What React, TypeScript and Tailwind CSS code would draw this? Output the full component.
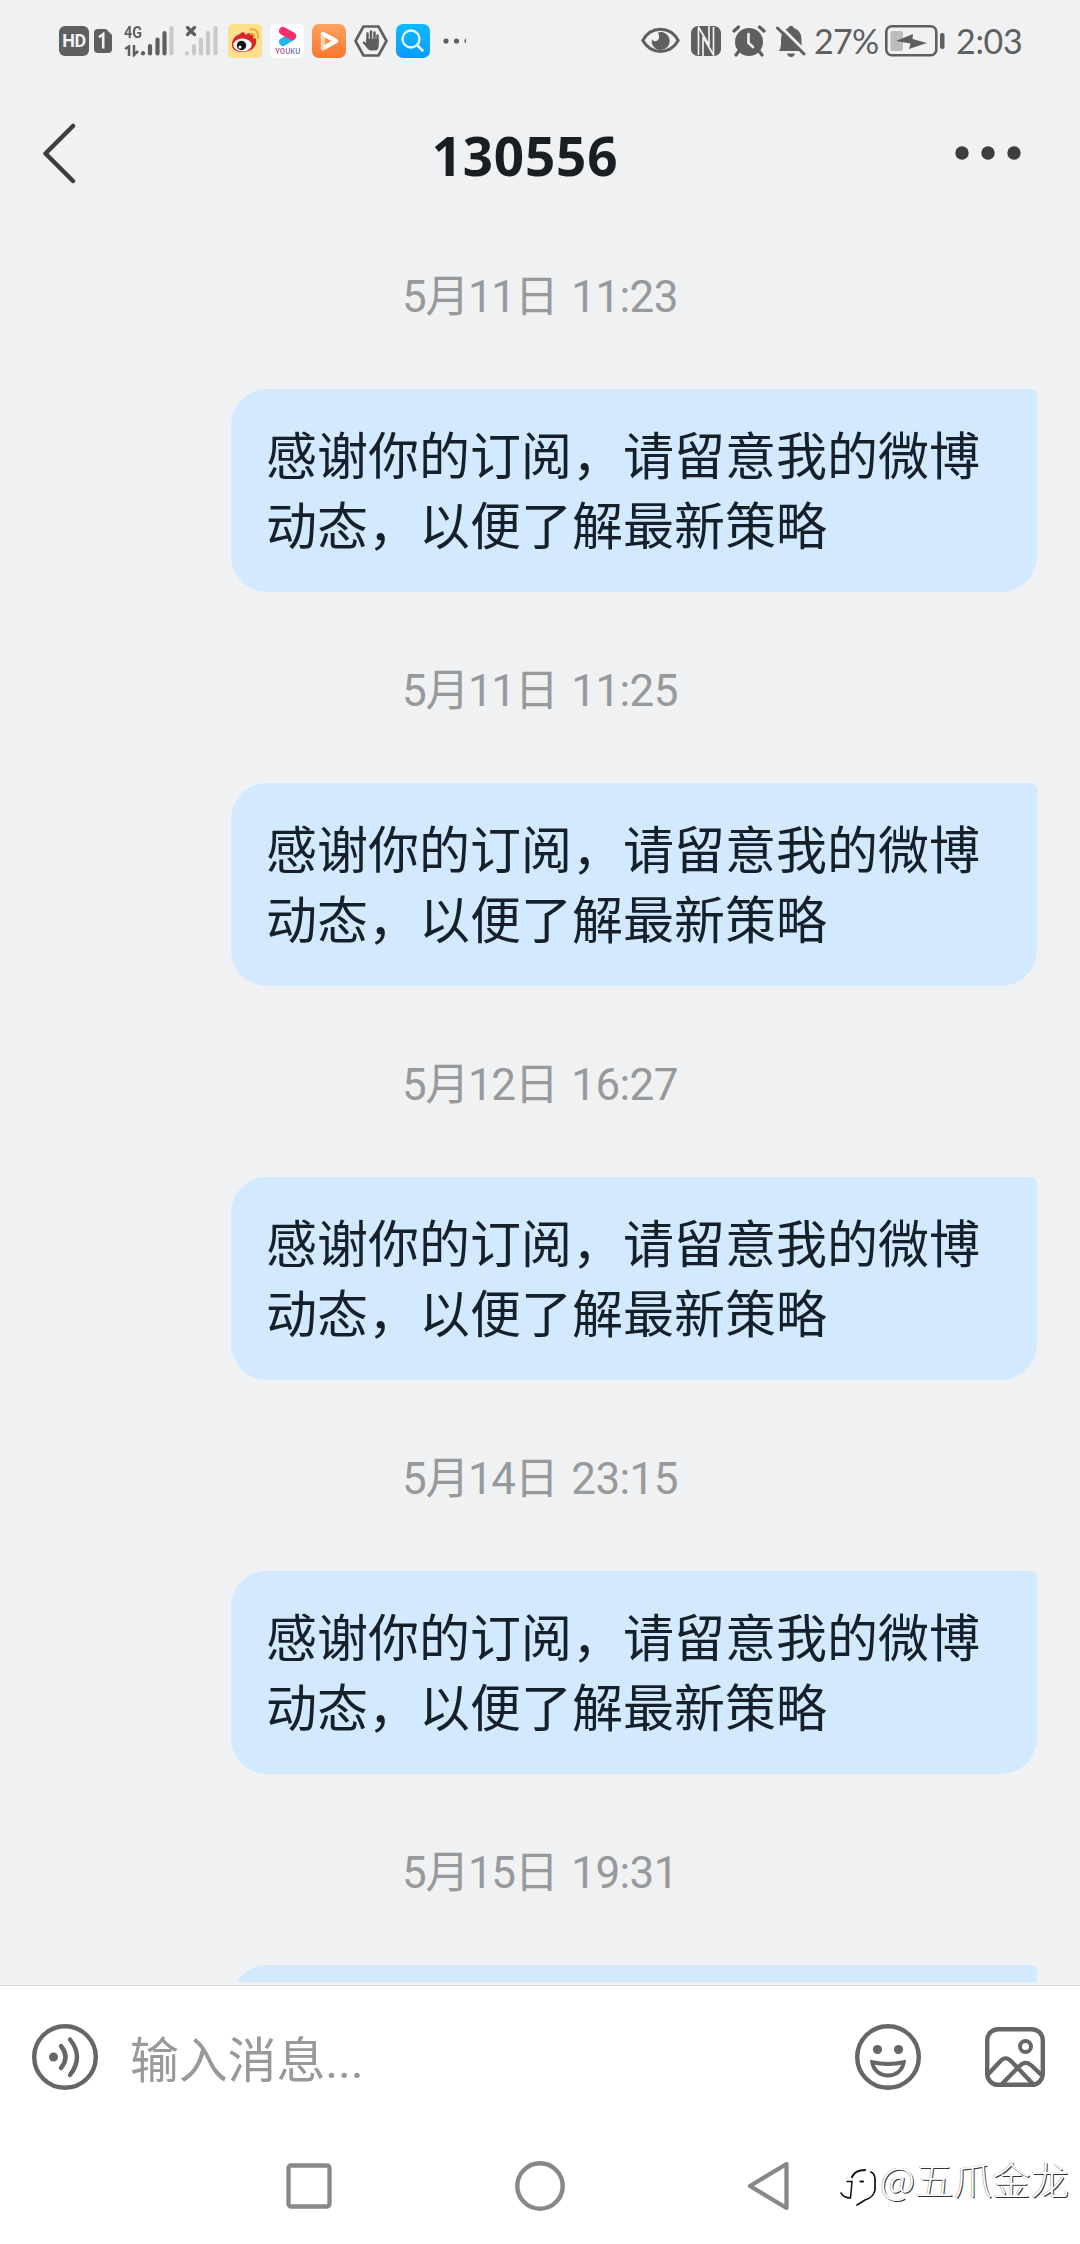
import React from "react";

const chats = [
  { day: "5月11日", time: "11:23", shown: true },
  { day: "5月11日", time: "11:25", shown: true },
  { day: "5月12日", time: "16:27", shown: true },
  { day: "5月14日", time: "23:15", shown: true },
  { day: "5月15日", time: "19:31", shown: false },
];

function StatusLeft() {
  return (
    <div className="flex h-[34px] items-center">
      <div className="flex h-[30px] w-[30px] items-center justify-center rounded-[6px] bg-[#5f5f60] font-[Roboto] text-[18px] leading-none font-bold tracking-[-0.5px] text-[#eff1f3]">HD</div>
      <svg className="ml-[5px]" width="18" height="24" viewBox="0 0 18 24">
        <path d="M4 0H12L18 6V20Q18 24 14 24H4Q0 24 0 20V4Q0 0 4 0Z" fill="#5f5f60" />
        <path d="M5 8.2L9.2 5V19.5" fill="none" stroke="#eff1f3" strokeWidth="2.6" />
      </svg>
      <div className="relative ml-[12px] h-[32px] w-[51px]">
        <span className="absolute top-0 left-0 origin-left scale-x-[0.85] font-[Roboto] text-[17px] leading-[14px] font-bold text-[#5f5f60]">4G</span>
        <svg width="51" height="32" viewBox="0 0 51 32">
          <path d="M1 24L5 21.500V31M10 20V30L14 26" fill="none" stroke="#5f5f60" strokeWidth="2.500" />
          <g stroke="#5f5f60" strokeWidth="4.200" strokeLinecap="round">
            <path d="M19 28V28.500M26 21V28.500M33.500 14.500V28.500M40.500 8V28.500" />
            <path d="M47.500 3V28.500" stroke="#c9c9cb" />
          </g>
        </svg>
      </div>
      <svg className="ml-[9px]" width="35" height="32" viewBox="0 0 35 32">
        <path d="M3.500 2.500L10.500 9.500M10.500 2.500L3.500 9.500" stroke="#5f5f60" strokeWidth="3.200" strokeLinecap="round" />
        <path d="M3 28V28.500M10 21V28.500M17 14.500V28.500M24 8V28.500M31.500 3V28.500" stroke="#c9c9cb" strokeWidth="4.200" strokeLinecap="round" />
      </svg>
      <svg className="ml-[9px]" width="34" height="34" viewBox="0 0 34 34">
        <rect width="34" height="34" rx="5" fill="#fce08c" />
        <path d="M4 22C3 16 8 11 12 10C14 7 18 8 17 11C21 8 26 8 25 13C29 14 29 18 27 22C24 29 6 31 4 22Z" fill="#d9262a" />
        <ellipse cx="14.500" cy="21" rx="9.200" ry="6.500" fill="#fff" />
        <circle cx="13.500" cy="21.500" r="4.700" fill="#111" />
        <circle cx="12" cy="23" r="1.500" fill="#fff" />
        <path d="M22 5.500C28 4 31 9 30 14M22.500 10C25.500 9 27 11.500 26 14" fill="none" stroke="#eba934" strokeWidth="1.800" strokeLinecap="round" />
      </svg>
      <div className="relative ml-[8px] h-[34px] w-[34px] rounded-[5px] bg-white">
        <svg width="34" height="34" viewBox="0 0 34 34">
          <path d="M13 18L22 12.500" stroke="#22b5f0" strokeWidth="8" strokeLinecap="round" />
          <path d="M13 7L22 12" stroke="#ff2d6b" strokeWidth="8" strokeLinecap="round" />
        </svg>
        <span className="absolute bottom-[3px] left-[5px] bg-linear-to-r from-[#d93a86] to-[#2e8cc8] bg-clip-text font-[Inter] text-[7px] leading-[7px] font-bold text-transparent">YOUKU</span>
      </div>
      <svg className="ml-[8px]" width="34" height="34" viewBox="0 0 34 34">
        <defs><linearGradient id="og" x2="0" y2="1"><stop stopColor="#fba55f" /><stop offset="1" stopColor="#fa752c" /></linearGradient></defs>
        <rect width="34" height="34" rx="7" fill="url(#og)" />
        <path d="M11 10L24 17L11 24.500Z" fill="none" stroke="#ffd1b0" strokeWidth="4.500" strokeLinejoin="round" />
        <path d="M11 10L24 17L13 23" fill="none" stroke="#fff" strokeWidth="4.200" strokeLinecap="round" strokeLinejoin="round" />
      </svg>
      <svg className="ml-[8px]" width="34" height="34" viewBox="0 0 34 34">
        <path d="M9.500 2.500H24.500L32.500 17L24.500 31.500H9.500L1.500 17Z" fill="none" stroke="#5f5f60" strokeWidth="2.600" strokeLinejoin="round" />
        <path d="M13.500 18V9.500M17 17V7.500M20.500 17V8.500M23.500 18V11.500" stroke="#5f5f60" strokeWidth="2.500" strokeLinecap="round" />
        <path d="M12.300 15H24.700V22Q24.700 26.500 20 26.500H17Q14.500 26.500 12.500 23.500L8.500 18.500Q9.500 16.500 12.300 19Z" fill="#5f5f60" />
      </svg>
      <svg className="ml-[8px]" width="34" height="34" viewBox="0 0 34 34">
        <defs><linearGradient id="bg" x2="0" y2="1"><stop stopColor="#10b9fc" /><stop offset="1" stopColor="#0a9bfd" /></linearGradient></defs>
        <rect width="34" height="34" rx="7" fill="url(#bg)" />
        <circle cx="15" cy="15" r="8.500" fill="none" stroke="#e9fbff" strokeWidth="2.300" />
        <path d="M21 21L26.500 26.500" stroke="#e9fbff" strokeWidth="2.500" strokeLinecap="round" />
      </svg>
      <svg className="ml-[13px]" width="24" height="8" viewBox="0 0 24 8">
        <circle cx="3" cy="4" r="2.600" fill="#5f5f60" /><circle cx="13.500" cy="4" r="2.600" fill="#5f5f60" />
        <path d="M23 1.600A2.600 2.600 0 0 0 23 6.400Z" fill="#5f5f60" />
      </svg>
    </div>
  );
}

function StatusRight() {
  return (
    <div className="flex h-[34px] items-center text-[#5f5f60]">
      <svg width="39" height="28" viewBox="0 0 39 28">
        <path d="M1.800 13.500C10 -1.500 29 -1.500 37.200 13.500C29 28 10 28 1.800 13.500Z" fill="none" stroke="currentColor" strokeWidth="3" strokeLinejoin="round" />
        <path d="M17 5.500A9 9 0 1 1 10.800 12.500Q12.500 15 15.500 14Q20 12 17 5.500Z" fill="currentColor" />
      </svg>
      <svg className="ml-[11px]" width="30" height="30" viewBox="0 0 30 30">
        <rect width="30" height="30" rx="7" fill="currentColor" />
        <path d="M7.500 29V1L18 19V0M12 30V11L22.500 29V1" fill="none" stroke="#eff1f3" strokeWidth="1.700" strokeLinejoin="round" />
      </svg>
      <svg className="ml-[11px]" width="34" height="32" viewBox="0 0 34 32">
        <circle cx="17" cy="17" r="14" fill="currentColor" />
        <path d="M2 6L6.500 2M32 6L27.500 2M7 26L4 30M27 26L30 30" stroke="currentColor" strokeWidth="3.200" strokeLinecap="round" />
        <path d="M16.500 9V18L21 22" fill="none" stroke="#eff1f3" strokeWidth="2.600" strokeLinecap="round" />
      </svg>
      <svg className="ml-[10px]" width="30" height="32" viewBox="0 0 30 32">
        <path d="M3 26Q5 23 5 19V14Q5 6 12 3Q15 -1.500 18 3Q25.500 6 25.500 14V19Q25.500 23 27.500 26Z" fill="currentColor" />
        <path d="M11 28.500H19Q18 32 15 32T11 28.500Z" fill="currentColor" />
        <path d="M4 1L30 27" stroke="#eff1f3" strokeWidth="3" />
        <path d="M1.500 3L28 29" stroke="currentColor" strokeWidth="3" strokeLinecap="round" />
      </svg>
      <span className="ml-[8px] w-[64px] font-[Lato] text-[34px] leading-[34px] tracking-[-0.7px]">27%</span>
      <svg className="ml-[7px]" width="61" height="32" viewBox="0 0 61 32">
        <rect x="1.300" y="1.300" width="50" height="29" rx="5.500" fill="none" stroke="currentColor" strokeWidth="2.600" />
        <rect x="5.500" y="6" width="12.500" height="20" rx="2" fill="#bdbdbf" />
        <path d="M11 16L28 9L27.500 14L42 18L24 24L25.500 18.500Z" fill="currentColor" />
        <rect x="55" y="8" width="4.500" height="16" rx="2" fill="currentColor" />
      </svg>
      <span className="ml-[10px] w-[66px] font-[Lato] text-[34px] leading-[34px] tracking-[-0.3px]">2:03</span>
    </div>
  );
}

export default function App() {
  return (
    <div className="flex h-[2244px] w-[1080px] flex-col overflow-hidden bg-[#eff1f3] font-['Roboto','Noto_Sans_CJK_SC',sans-serif]">
      <header className="flex h-[82px] shrink-0 items-center justify-between pr-[58px] pl-[59px]">
        <StatusLeft />
        <StatusRight />
      </header>
      <div className="flex h-[142px] shrink-0 items-start justify-between pr-[59px] pl-[42px]">
        <svg className="mt-[41px]" width="35" height="61" viewBox="0 0 35 61">
          <path d="M31 3L3.500 30.500L31 58" fill="none" stroke="#3d3d3e" strokeWidth="4.500" strokeLinecap="round" strokeLinejoin="round" />
        </svg>
        <h1 className="mt-[43px] ml-[18px] font-['Noto_Sans'] text-[53px] leading-[62px] font-bold tracking-[0.8px] text-[#1a1e24]">130556</h1>
        <svg className="mt-[64px]" width="66" height="14" viewBox="0 0 66 14" fill="#3d3d3e">
          <circle cx="7" cy="7" r="6.700" /><circle cx="33" cy="7" r="6.700" /><circle cx="59" cy="7" r="6.700" />
        </svg>
      </div>
      <main className="h-[1758px] shrink-0 overflow-hidden">
        {chats.map((c) => (
          <section key={c.day + c.time} className="flex h-[394px] flex-col">
            <time className="mt-[43px] flex justify-center gap-[14px] text-[44px] leading-[60px] text-[#98999b]">
              <span className="tracking-[-1.400px]">{c.day}</span>
              <span className="tracking-[-0.600px]">{c.time}</span>
            </time>
            <p className="mt-[62px] mr-[43px] h-[203px] w-[806px] shrink-0 self-end rounded-[36px] rounded-tr-[6px] bg-[#d2e9ff] pt-[34px] pr-[36px] pl-[35px] text-[51px] leading-[70px] text-[#16202a]">
              {c.shown && "感谢你的订阅，请留意我的微博动态，以便了解最新策略"}
            </p>
          </section>
        ))}
      </main>
      <footer className="mt-[3px] flex h-[259px] shrink-0 flex-col border-t border-[#d8d9db] bg-white">
        <div className="flex h-[142px] items-center pr-[35px] pl-[32px] text-[#666666]">
          <svg width="66" height="66" viewBox="0 0 66 66">
            <circle cx="33" cy="33" r="30.800" fill="none" stroke="currentColor" strokeWidth="4.400" />
            <circle cx="21.500" cy="33" r="4.500" fill="currentColor" />
            <path d="M29 22Q38 33 29 44M38 15.500Q52 33 38 51" fill="none" stroke="currentColor" strokeWidth="4.400" strokeLinecap="round" />
          </svg>
          <span className="mt-[9px] ml-[32px] flex-1 text-[49px] leading-[60px] tracking-[-0.2px] text-[#999999]">输入消息...</span>
          <svg width="66" height="66" viewBox="0 0 66 66">
            <circle cx="33" cy="33" r="30.800" fill="none" stroke="currentColor" strokeWidth="4.400" />
            <circle cx="22.500" cy="25.500" r="4.600" fill="currentColor" /><circle cx="43.500" cy="25.500" r="4.600" fill="currentColor" />
            <path d="M17.300 38.300Q33 41.500 48.700 38.300C46 56 20 56 17.300 38.300Z" fill="none" stroke="currentColor" strokeWidth="4" />
          </svg>
          <svg className="ml-[64px]" width="60" height="60" viewBox="0 0 60 60">
            <rect x="2.200" y="2.200" width="55.600" height="55.600" rx="11" fill="none" stroke="currentColor" strokeWidth="4.400" />
            <circle cx="40.500" cy="19.500" r="5.500" fill="none" stroke="currentColor" strokeWidth="4" />
            <path d="M2.500 48L15 34.500Q20.500 28 26.500 34.500L48 57M17 57L34.500 39Q40.500 33 46.500 38.500L57 48.500" fill="none" stroke="currentColor" strokeWidth="4.200" />
          </svg>
        </div>
        <div className="flex h-[116px] items-center pl-[286px]">
          <svg width="46" height="46" viewBox="0 0 46 46"><rect x="2.500" y="2.500" width="41" height="41" rx="2.500" fill="none" stroke="#888888" strokeWidth="4.300" /></svg>
          <svg className="ml-[183px]" width="50" height="50" viewBox="0 0 50 50"><circle cx="25" cy="25" r="22.700" fill="none" stroke="#888888" strokeWidth="4.400" /></svg>
          <svg className="ml-[181px]" width="46" height="52" viewBox="0 0 46 52"><path d="M4 26L40.500 4V48Z" fill="none" stroke="#888888" strokeWidth="4.300" strokeLinejoin="round" /></svg>
          <svg className="ml-[48px]" width="40" height="42" viewBox="0 0 40 42" fill="none" stroke="#111" strokeLinecap="round">
            <path d="M12 12Q15 5 25 5" strokeWidth="2.200" />
            <path d="M31 7Q36 9 35 18V25Q34 32 25 35L17 40" strokeWidth="1.700" />
            <path d="M7 16.500H12L10.500 33Q4 33 1 28" strokeWidth="1.500" />
            <path d="M20.500 16.500H23" strokeWidth="2.200" />
          </svg>
          <span className="-mt-[16px] font-['Noto_Sans_CJK_SC',sans-serif] text-[38.500px] leading-[48px] font-light text-white [text-shadow:1px_1px_0_#333,-0.500px_-0.500px_0_#999]">@五爪金龙</span>
        </div>
      </footer>
    </div>
  );
}
